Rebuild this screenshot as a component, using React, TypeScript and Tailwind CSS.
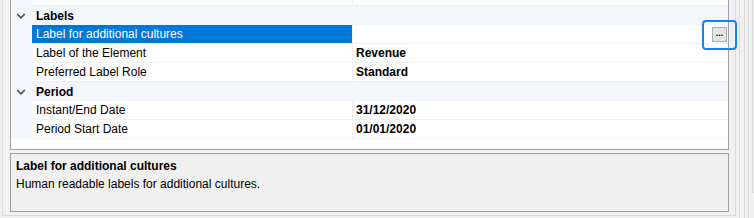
const props = [
  { type: "cat", label: "Labels" },
  { type: "row", label: "Label for additional cultures", value: "", selected: true },
  { type: "row", label: "Label of the Element", value: "Revenue" },
  { type: "row", label: "Preferred Label Role", value: "Standard" },
  { type: "cat", label: "Period" },
  { type: "row", label: "Instant/End Date", value: "31/12/2020" },
  { type: "row", label: "Period Start Date", value: "01/01/2020" },
];

function Chevron() {
  return (
    <svg width="10" height="6" viewBox="0 0 10 6" className="ml-[5px]">
      <path d="M1.2 1 L5 4.8 L8.8 1" fill="none" stroke="#4a4a4a" strokeWidth="1.6" />
    </svg>
  );
}

function PropRow({ label, value, selected }: { label: string; value: string; selected?: boolean }) {
  return (
    <div className="flex h-[19px]">
      <div className="w-[21px] shrink-0 bg-[#f3f6fb]" />
      <div
        className={`flex w-[320px] shrink-0 items-center border-b border-[#f0f0f0] pl-[4px] ${
          selected ? "bg-[#0078d7] text-white" : ""
        }`}
      >
        {label}
      </div>
      <div className="relative flex flex-1 items-center border-b border-l border-[#f0f0f0] pl-[3px] font-bold">
        {value}
        {selected && (
          <div className="absolute right-[1px] top-[2px] flex h-[15px] w-[15px] items-center justify-center border border-[#adadad] bg-[#e5e5e5] pb-[3px] text-[9px] font-bold leading-none">
            ...
          </div>
        )}
      </div>
    </div>
  );
}

export default function App() {
  return (
    <div className="relative flex h-[218px] w-[754px] overflow-hidden bg-[#f0f0f0] font-['Liberation_Sans',Arial,sans-serif] text-[12px] leading-none text-black">
      <div className="ml-[2px] flex h-[216px] w-[734px] shrink-0 border-b border-l border-r border-[#dadada] pl-[7px]">
        <div className="flex w-[719px] flex-col">
          <div className="h-[150px] border-x border-b border-[#a0a0a0] bg-white">
            <div className="flex h-[6px]">
              <div className="w-[21px] shrink-0 bg-[#f3f6fb]" />
              <div className="w-[320px] shrink-0 border-b border-[#f0f0f0]" />
              <div className="flex-1 border-b border-l border-[#f0f0f0]" />
            </div>
            {props.map((p) =>
              p.type === "cat" ? (
                <div key={p.label} className="flex h-[19px] items-center bg-[#f3f6fb]">
                  <div className="flex w-[21px] shrink-0 items-center">
                    <Chevron />
                  </div>
                  <span className="pl-[4px] font-bold">{p.label}</span>
                </div>
              ) : (
                <PropRow key={p.label} label={p.label} value={p.value ?? ""} selected={p.selected} />
              )
            )}
          </div>
          <div className="mt-[3px] h-[59px] border border-[#a0a0a0] bg-[#f0f0f0] px-[5px] pt-[3px] leading-[18px]">
            <div className="font-bold">Label for additional cultures</div>
            <div>Human readable labels for additional cultures.</div>
          </div>
        </div>
      </div>
      <div className="flex h-full">
        <div className="w-[3px]" />
        <div className="w-[5px] border-l border-[#dadada]" />
        <div className="w-[4px] border-l border-[#dadada]" />
        <div className="w-[4px] border-l border-[#dadada]" />
        <div className="h-[193px] w-[2px] border-b border-l border-[#dadada]" />
      </div>
      <div className="absolute left-[702px] top-[20px] h-[30px] w-[35px] rounded-[4px] border-2 border-[#1a7fef]" />
    </div>
  );
}
